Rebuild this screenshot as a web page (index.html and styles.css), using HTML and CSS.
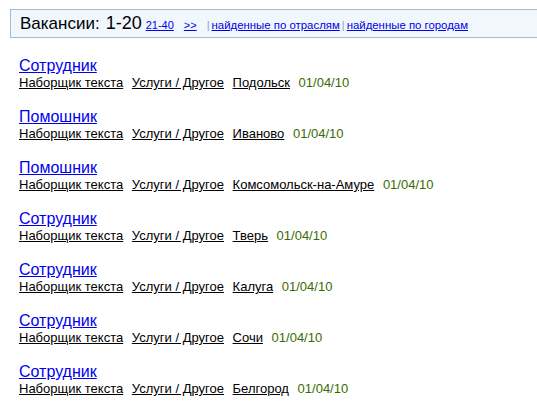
FILE: index.html
```html
<!DOCTYPE html>
<html lang="ru">
<head>
    <meta charset="UTF-8">
    <title>Вакансии</title>
    <link rel="stylesheet" href="styles.css">
</head>
<body>

    <!-- Заголовок с навигацией -->
    <div class="head-bar">
        <span class="head-title">Вакансии:</span>
        <span class="head-range">1-20</span>
        <a href="#" class="pg">21-40</a>
        <a href="#" class="pg">&gt;&gt;</a>
        <span class="sep sep-first">|</span>
        <a href="#" class="filter">найденные по отраслям</a><span class="sep">|</span><a href="#" class="filter">найденные по городам</a>
    </div>

    <div class="jobs">
        <div class="job">
            <a href="#" class="job-title">Сотрудник</a>
            <div class="job-info">
                <a href="#">Наборщик текста</a>
                <a href="#">Услуги / Другое</a>
                <a href="#">Подольск</a>
                <span class="date">01/04/10</span>
            </div>
        </div>
        <div class="job">
            <a href="#" class="job-title">Помошник</a>
            <div class="job-info">
                <a href="#">Наборщик текста</a>
                <a href="#">Услуги / Другое</a>
                <a href="#">Иваново</a>
                <span class="date">01/04/10</span>
            </div>
        </div>
        <div class="job">
            <a href="#" class="job-title">Помошник</a>
            <div class="job-info">
                <a href="#">Наборщик текста</a>
                <a href="#">Услуги / Другое</a>
                <a href="#">Комсомольск-на-Амуре</a>
                <span class="date">01/04/10</span>
            </div>
        </div>
        <div class="job">
            <a href="#" class="job-title">Сотрудник</a>
            <div class="job-info">
                <a href="#">Наборщик текста</a>
                <a href="#">Услуги / Другое</a>
                <a href="#">Тверь</a>
                <span class="date">01/04/10</span>
            </div>
        </div>
        <div class="job">
            <a href="#" class="job-title">Сотрудник</a>
            <div class="job-info">
                <a href="#">Наборщик текста</a>
                <a href="#">Услуги / Другое</a>
                <a href="#">Калуга</a>
                <span class="date">01/04/10</span>
            </div>
        </div>
        <div class="job">
            <a href="#" class="job-title">Сотрудник</a>
            <div class="job-info">
                <a href="#">Наборщик текста</a>
                <a href="#">Услуги / Другое</a>
                <a href="#">Сочи</a>
                <span class="date">01/04/10</span>
            </div>
        </div>
        <div class="job">
            <a href="#" class="job-title">Сотрудник</a>
            <div class="job-info">
                <a href="#">Наборщик текста</a>
                <a href="#">Услуги / Другое</a>
                <a href="#">Белгород</a>
                <span class="date">01/04/10</span>
            </div>
        </div>
    </div>

</body>
</html>
```

FILE: styles.css
```css
body {
    font-family: "Liberation Sans", Arial, sans-serif;
    margin: 0;
    padding: 0;
    background: #fff;
    color: #000;
    overflow: hidden;
}

.head-bar {
    margin: 9px 0 0 10px;
    height: 27px;
    padding-left: 9px;
    background: #f0f7fd;
    border: 1px solid #a5bccf;
    border-right: none;
    display: flex;
    align-items: baseline;
    white-space: nowrap;
    line-height: 27px;
}

.head-title {
    font-size: 17px;
    margin-right: 6px;
}

.head-range {
    font-size: 18px;
    margin-right: 4px;
}

.head-bar a {
    color: #0000ee;
    font-size: 11px;
}

.head-bar a.pg {
    margin-right: 10px;
}

.head-bar a.filter {
    font-size: 11.4px;
}

.sep {
    font-size: 11px;
    color: #8aa4bb;
    margin: 0 2px;
}

.sep-first {
    margin-left: 0;
    margin-right: 2px;
}

.jobs {
    padding: 19px 0 0 19px;
}

.job {
    height: 51px;
}

.job-title {
    display: inline-block;
    font-size: 16px;
    line-height: 18px;
    color: #0000ee;
}

.job-info {
    font-size: 13px;
    line-height: 16px;
    white-space: nowrap;
}

.job-info a {
    color: #000;
    margin-right: 5px;
}

.date {
    color: #3b6b00;
}
```
